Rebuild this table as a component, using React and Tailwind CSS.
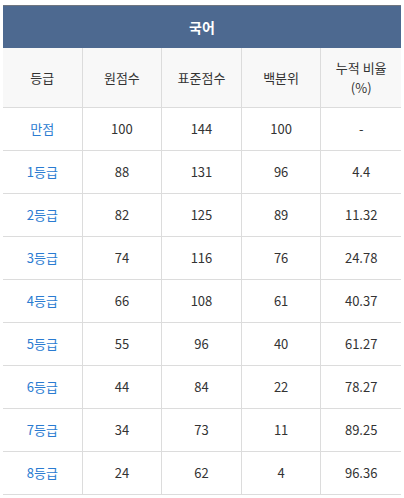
import React from 'react';

const rows = [
  ['만점', '100', '144', '100', '-'],
  ['1등급', '88', '131', '96', '4.4'],
  ['2등급', '82', '125', '89', '11.32'],
  ['3등급', '74', '116', '76', '24.78'],
  ['4등급', '66', '108', '61', '40.37'],
  ['5등급', '55', '96', '40', '61.27'],
  ['6등급', '44', '84', '22', '78.27'],
  ['7등급', '34', '73', '11', '89.25'],
  ['8등급', '24', '62', '4', '96.36'],
];

const headers = ['등급', '원점수', '표준점수', '백분위'];

export default function App() {
  return (
    <div
      className="bg-white w-[404px] h-[498px] pt-[5px] px-[3px] text-[13px] text-[#333]"
      style={{ fontFamily: '"Segoe UI", "Noto Sans CJK KR", "Noto Sans", sans-serif' }}
    >
      <div className="w-[398px]">
        {/* subject title */}
        <div className="h-[43px] bg-[#4d6990] border-t border-t-[#6f7680] flex items-center justify-center text-white font-bold text-[14px]">
          국어
        </div>

        {/* column heads */}
        <div className="grid grid-cols-5 bg-[#f8f8f8] border-b border-[#dcdcdc]">
          {headers.map((h, i) => (
            <div key={i} className="h-[59px] flex items-center justify-center border-r border-[#dcdcdc]">
              {h}
            </div>
          ))}
          <div className="h-[59px] flex flex-col items-center justify-center leading-[20px]">
            <span>누적 비율</span>
            <span>(%)</span>
          </div>
        </div>

        {/* data rows */}
        {rows.map((r, ri) => (
          <div key={ri} className="grid grid-cols-5 border-b border-[#dcdcdc]">
            {r.map((c, ci) => (
              <div
                key={ci}
                className={
                  'h-[42px] flex items-center justify-center ' +
                  (ci < 4 ? 'border-r border-[#dcdcdc] ' : '') +
                  (ci === 0 ? 'text-[#2a7bd1]' : '')
                }
              >
                {c}
              </div>
            ))}
          </div>
        ))}
      </div>
    </div>
  );
}
